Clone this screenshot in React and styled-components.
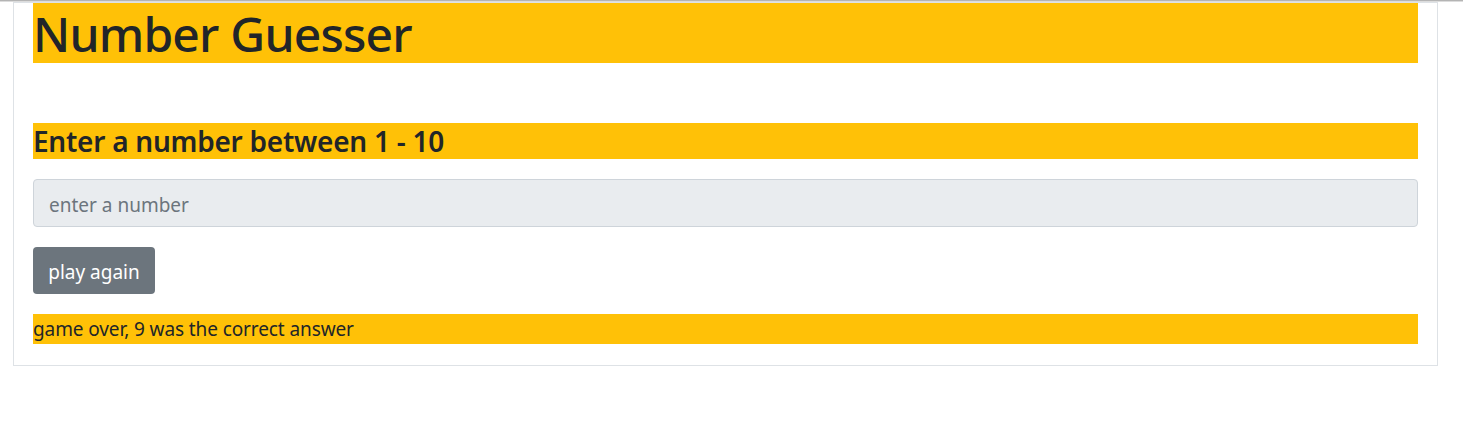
import React from "react";
import styled, { createGlobalStyle } from "styled-components";

const Global = createGlobalStyle`
  html, body { margin: 0; padding: 0; background: #fff; }
  body { font-family: "Noto Sans", "Open Sans", sans-serif; color: #212529; }
  * { box-sizing: border-box; }
`;

const TopRule = styled.div`
  height: 2px;
  border-top: 1px solid #b4b4b4;
  border-bottom: 1px solid #dcdcdc;
`;

const Page = styled.div`
  padding: 0 25px 0 13px;
`;

const Card = styled.div`
  width: 1425px;
  border: 1px solid #dee2e6;
  padding: 0 19px 21px 19px;
  display: flex;
  flex-direction: column;
`;

const Title = styled.h1`
  margin: 0 0 60px 0;
  padding-top: 2px;
  background: #ffc107;
  font-size: 48px;
  font-weight: 500;
  line-height: 58px;
  height: 60px;
  color: #212529;
  letter-spacing: -0.8px;
`;

const Prompt = styled.h2`
  margin: 0 0 20px 0;
  padding-top: 1px;
  background: #ffc107;
  font-size: 28px;
  font-weight: 600;
  line-height: 35px;
  height: 36px;
  color: #212529;
  letter-spacing: -0.25px;
`;

const Input = styled.input`
  height: 48px;
  width: 100%;
  margin: 0 0 20px 0;
  padding: 3px 15px 0 15px;
  background: #e9ecef;
  border: 1px solid #ced4da;
  border-radius: 4px;
  font-family: inherit;
  font-size: 19px;
  color: #495057;
  &::placeholder { color: #6c757d; opacity: 1; }
  &:focus { outline: none; }
`;

const Button = styled.button`
  align-self: flex-start;
  width: 122px;
  height: 47px;
  margin: 0 0 20px 0;
  background: #6c757d;
  color: #fff;
  border: none;
  border-radius: 4px;
  font-family: inherit;
  font-size: 19px;
  padding: 2px 0 0 0;
`;

const Message = styled.p`
  margin: 0;
  padding-top: 1px;
  background: #ffc107;
  font-size: 19px;
  line-height: 29px;
  height: 30px;
  color: #212529;
  letter-spacing: -0.1px;
`;

export default function App() {
  return (
    <>
      <Global />
      <TopRule />
      <Page>
        <Card>
          <Title>Number Guesser</Title>
          <Prompt>Enter a number between 1 - 10</Prompt>
          <Input placeholder="enter a number" readOnly />
          <Button>play again</Button>
          <Message>game over, 9 was the correct answer</Message>
        </Card>
      </Page>
    </>
  );
}
